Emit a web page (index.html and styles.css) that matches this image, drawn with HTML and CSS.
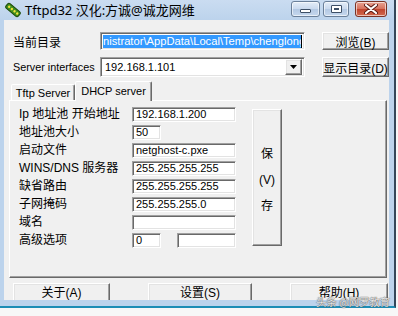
FILE: index.html
```html
<!DOCTYPE html>
<html>
<head>
<meta charset="utf-8">
<link rel="stylesheet" href="styles.css">
</head>
<body>
<div class="window">
  <div class="titlebar">
    <svg class="appicon" viewBox="0 0 16 16" width="16" height="16">
      <g transform="rotate(40 8 8)">
        <rect x="0" y="5" width="16" height="6" rx="2" fill="#3f8f1f" stroke="#1e4a0c" stroke-width="1"/>
        <circle cx="3" cy="8" r="1.2" fill="#f2e23a"/>
        <circle cx="6.5" cy="8" r="1.2" fill="#f2e23a"/>
        <circle cx="10" cy="8" r="1.2" fill="#f2e23a"/>
        <circle cx="13.5" cy="8" r="1.2" fill="#f2e23a"/>
      </g>
    </svg>
    <span class="title">Tftpd32 汉化:方诚@诚龙网维</span>
    <div class="tb-buttons">
      <span class="tb tb-min"><span class="glyph-min"></span></span>
      <span class="tb tb-max"><span class="glyph-max"></span></span>
      <span class="tb tb-close">
        <svg viewBox="0 0 14 10" width="14" height="10"><path d="M2 1 L12 9 M12 1 L2 9" stroke="#5a1a12" stroke-width="4" stroke-linecap="round"/><path d="M2 1 L12 9 M12 1 L2 9" stroke="#fff" stroke-width="2.2" stroke-linecap="round"/></svg>
      </span>
    </div>
  </div>
  <div class="client">
    <div class="row r1">
      <span class="lbl cjk">当前目录</span>
      <div class="field dir"><span class="sel">nistrator\AppData\Local\Temp\chenglong</span><span class="caret"></span></div>
      <div class="btn topbtn">浏览(B)</div>
    </div>
    <div class="row r2">
      <span class="lbl">Server interfaces</span>
      <div class="field combo"><span class="combo-text">192.168.1.101</span><span class="drop"><svg viewBox="0 0 7 4" width="7" height="4"><path d="M0 0 H7 L3.5 4 Z" fill="#000"/></svg></span></div>
      <div class="btn topbtn">显示目录(D)</div>
    </div>
    <div class="tabs">
      <div class="tab">Tftp Server</div>
      <div class="tab active">DHCP server</div>
    </div>
    <div class="panel">
      <div class="form">
        <div class="frow"><span class="flbl">Ip 地址池 开始地址</span><span class="field inp wide">192.168.1.200</span></div>
        <div class="frow"><span class="flbl">地址池大小</span><span class="field inp short">50</span></div>
        <div class="frow"><span class="flbl">启动文件</span><span class="field inp wide">netghost-c.pxe</span></div>
        <div class="frow"><span class="flbl">WINS/DNS 服务器</span><span class="field inp wide">255.255.255.255</span></div>
        <div class="frow"><span class="flbl">缺省路由</span><span class="field inp wide">255.255.255.255</span></div>
        <div class="frow"><span class="flbl">子网掩码</span><span class="field inp wide">255.255.255.0</span></div>
        <div class="frow"><span class="flbl">域名</span><span class="field inp wide"></span></div>
        <div class="frow"><span class="flbl">高级选项</span><span class="field inp short">0</span><span class="field inp adv"></span></div>
      </div>
      <div class="btn save"><span>保</span><span>(V)</span><span>存</span></div>
    </div>
    <div class="bottom">
      <div class="btn bbtn b1">关于(A)</div>
      <div class="btn bbtn b2">设置(S)</div>
      <div class="btn bbtn b3">帮助(H)</div>
    </div>
  </div>
  <div class="watermark">头条 @网罗教育</div>
</div>
</body>
</html>
```
FILE: styles.css
```css
html, body {
  margin: 0;
  padding: 0;
}
body {
  background: #f7f7f7;
  width: 398px;
  height: 316px;
  overflow: hidden;
  font-family: "Liberation Sans", "Noto Sans CJK SC", sans-serif;
  font-size: 11px;
  color: #000;
}
.window {
  position: relative;
  width: 394px;
  height: 306px;
  background: linear-gradient(#cadcf1, #bcd3ec 20px, #bcd3ec);
  border-right: 2px solid #34475a;
  border-bottom: 2px solid #1d8db5;
}
.titlebar {
  height: 20px;
  display: flex;
  align-items: center;
  position: relative;
}
.appicon {
  margin-left: 5px;
  flex: none;
}
.title {
  margin-left: 4px;
  font-family: "Noto Sans", "Noto Sans CJK SC", sans-serif;
  font-size: 13px;
  line-height: 20px;
  color: #000;
  white-space: nowrap;
}
.tb-buttons {
  margin-left: auto;
  margin-right: 7px;
  align-self: flex-start;
  margin-top: 1px;
  display: flex;
}
.tb {
  height: 16px;
  border: 1px solid #6a7f99;
  border-radius: 3px;
  box-sizing: border-box;
  background: linear-gradient(#e4edf8, #c9d9ee 50%, #b3c8e3 51%, #c6d8ee);
  display: flex;
  align-items: center;
  justify-content: center;
  box-shadow: inset 0 0 0 1px rgba(255,255,255,0.6);
}
.tb-min { width: 29px; }
.tb-max { width: 26px; margin-left: 3px; }
.tb-close {
  width: 32px;
  margin-left: 6px;
  border-color: #7a3326;
  background: linear-gradient(#e8a494, #d6705c 50%, #c0442d 51%, #d26a4f);
}
.glyph-min {
  width: 11px;
  height: 4px;
  margin-top: 4px;
  background: #fff;
  border: 1px solid #3d4f66;
  box-sizing: border-box;
  border-radius: 1px;
}
.glyph-max {
  width: 11px;
  height: 8px;
  border: 1px solid #3d4f66;
  box-sizing: border-box;
  background: #3d4f66;
  box-shadow: inset 0 0 0 1px #fff, inset 0 0 0 2px #fff;
  border-radius: 1px;
  position: relative;
}
.client {
  margin-left: 4px;
  width: 385px;
  height: 280px;
  background: #f0f0f0;
  overflow: hidden;
  position: relative;
}
.row {
  display: flex;
  align-items: center;
}
.r1 {
  margin-top: 12px;
  height: 18px;
}
.r2 {
  margin-top: 7px;
  height: 20px;
}
.lbl {
  width: 87px;
  padding-left: 9px;
  white-space: nowrap;
  flex: none;
  font-size: 10.8px;
}
.lbl.cjk {
  font-size: 12px;
}
.field {
  box-sizing: border-box;
  background: #fff;
  border: 1px solid;
  border-color: #a0a0a0 #ffffff #ffffff #a0a0a0;
  box-shadow: inset 1px 1px 0 #696969, inset -1px -1px 0 #e3e3e3;
  white-space: nowrap;
  overflow: hidden;
}
.dir {
  width: 205px;
  height: 18px;
  display: flex;
  align-items: center;
  padding-left: 2px;
  padding-right: 2px;
}
.sel {
  background: #3399ff;
  color: #fff;
  font-size: 11.2px;
  line-height: 13px;
  flex: 1;
  overflow: hidden;
  white-space: nowrap;
}
.caret {
  width: 1px;
  height: 13px;
  background: #000;
  flex: none;
}
.combo {
  width: 205px;
  height: 20px;
  display: flex;
  align-items: center;
  padding: 2px;
}
.combo-text {
  flex: 1;
  padding-left: 2px;
  font-size: 11px;
}
.drop {
  width: 17px;
  height: 16px;
  box-sizing: border-box;
  background: #f0f0f0;
  border: 1px solid;
  border-color: #ffffff #696969 #696969 #ffffff;
  box-shadow: inset -1px -1px 0 #a0a0a0, inset 1px 1px 0 #e3e3e3;
  display: flex;
  align-items: center;
  justify-content: center;
}
.btn {
  box-sizing: border-box;
  background: #f0f0f0;
  border: 1px solid;
  border-color: #ffffff #696969 #696969 #ffffff;
  box-shadow: inset -1px -1px 0 #a0a0a0, inset 1px 1px 0 #e3e3e3;
  display: flex;
  align-items: center;
  justify-content: center;
  font-size: 12px;
  white-space: nowrap;
}
.topbtn {
  margin-left: 17px;
  width: 67px;
  height: 100%;
}
.tabs {
  margin-top: 4px;
  height: 19px;
  display: flex;
  align-items: flex-end;
  padding-left: 7px;
  position: relative;
  z-index: 1;
}
.tab {
  box-sizing: border-box;
  height: 16px;
  width: 64px;
  border: 1px solid;
  border-bottom: none;
  border-color: #ffffff #696969 transparent #ffffff;
  box-shadow: inset -1px 0 0 #a0a0a0;
  border-radius: 2px 2px 0 0;
  display: flex;
  align-items: center;
  justify-content: center;
  font-size: 11px;
  background: #f0f0f0;
}
.tab.active {
  height: 20px;
  width: 77px;
  margin-bottom: -1px;
  padding-bottom: 2px;
}
.panel {
  margin-left: 5px;
  width: 378px;
  height: 178px;
  box-sizing: border-box;
  border: 1px solid;
  border-color: #ffffff #696969 #696969 #ffffff;
  box-shadow: inset -1px -1px 0 #a0a0a0;
  padding: 6px 0 0 9px;
  display: flex;
  align-items: flex-start;
}
.form {
  display: flex;
  flex-direction: column;
  gap: 3px;
  width: 217px;
}
.frow {
  display: flex;
  height: 15px;
  align-items: center;
}
.flbl {
  width: 113px;
  flex: none;
  font-size: 12px;
  white-space: nowrap;
  line-height: 15px;
}
.inp {
  height: 15px;
  font-size: 11px;
  line-height: 13px;
  padding-left: 3px;
  display: block;
  flex: none;
}
.wide { width: 104px; }
.short { width: 29px; }
.adv { width: 59px; margin-left: 16px; }
.save {
  margin-left: 16px;
  margin-top: 2px;
  width: 30px;
  height: 137px;
  flex-direction: column;
  font-size: 12px;
  line-height: 26px;
  padding-top: 4px;
}
.bottom {
  margin-top: 5px;
  display: flex;
  padding-left: 9px;
  gap: 38px;
}
.bbtn {
  height: 21px;
  font-size: 12px;
  line-height: 14px;
  align-items: flex-start;
  padding-top: 2px;
}
.b1 { width: 97px; }
.b2 { width: 104px; }
.b3 { width: 98px; }
.watermark {
  position: absolute;
  left: 316px;
  top: 296px;
  font-family: "Noto Sans CJK SC", sans-serif;
  font-size: 10.3px;
  line-height: 12px;
  color: rgba(255, 255, 255, 0.85);
  text-shadow: 0 0 1px #555, 0 0 1px #555;
  white-space: nowrap;
}
```
